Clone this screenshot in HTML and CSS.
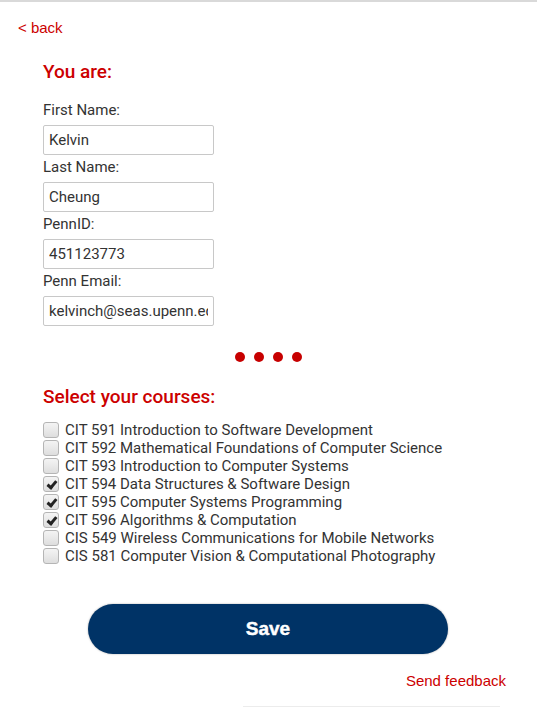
FILE: index.html
```html
<!DOCTYPE html>
<html>
<head>
<meta charset="utf-8">
<link rel="stylesheet" href="styles.css">
</head>
<body>
<div class="page">
  <a class="back" href="#">&lt; back</a>
  <main class="content">
    <h2 class="heading">You are:</h2>
    <div class="field">
      <label class="label">First Name:</label>
      <input class="input" type="text" value="Kelvin">
    </div>
    <div class="field">
      <label class="label">Last Name:</label>
      <input class="input" type="text" value="Cheung">
    </div>
    <div class="field">
      <label class="label">PennID:</label>
      <input class="input" type="text" value="451123773">
    </div>
    <div class="field">
      <label class="label">Penn Email:</label>
      <input class="input" type="text" value="kelvinch@seas.upenn.edu">
    </div>
  </main>
  <div class="dots"><span></span><span></span><span></span><span></span></div>
  <section class="content">
    <h2 class="heading courses-heading">Select your courses:</h2>
    <ul class="courses">
      <li><input type="checkbox" class="cb"><span>CIT 591 Introduction to Software Development</span></li>
      <li><input type="checkbox" class="cb"><span>CIT 592 Mathematical Foundations of Computer Science</span></li>
      <li><input type="checkbox" class="cb"><span>CIT 593 Introduction to Computer Systems</span></li>
      <li><input type="checkbox" class="cb" checked><span>CIT 594 Data Structures &amp; Software Design</span></li>
      <li><input type="checkbox" class="cb" checked><span>CIT 595 Computer Systems Programming</span></li>
      <li><input type="checkbox" class="cb" checked><span>CIT 596 Algorithms &amp; Computation</span></li>
      <li><input type="checkbox" class="cb"><span>CIS 549 Wireless Communications for Mobile Networks</span></li>
      <li><input type="checkbox" class="cb"><span>CIS 581 Computer Vision &amp; Computational Photography</span></li>
    </ul>
  </section>
  <div class="actions"><button class="save">Save</button></div>
  <div class="feedback-row"><a class="feedback" href="#">Send feedback</a></div>
  <div class="bottom-line"></div>
</div>
</body>
</html>
```
FILE: styles.css
```css
html, body {
  margin: 0;
  padding: 0;
  background: #fff;
}
body {
  font-family: Roboto, "Liberation Sans", sans-serif;
  color: #333;
  border-top: 2px solid #d9d9d9;
}
.page {
  display: flex;
  flex-direction: column;
}
.back {
  display: block;
  margin: 16px 0 0 18px;
  font-family: "Liberation Sans", Arial, sans-serif;
  font-size: 15px;
  line-height: 20px;
  color: #c00;
  text-decoration: none;
}
.content {
  padding-left: 43px;
  display: flex;
  flex-direction: column;
}
.heading {
  margin: 22px 0 17px;
  font-family: Roboto, "Liberation Sans", sans-serif;
  font-size: 19px;
  line-height: 23px;
  font-weight: 500;
  color: #c00;
}
.field {
  display: flex;
  flex-direction: column;
  margin-bottom: 2px;
}
.label {
  font-size: 15px;
  line-height: 20px;
  color: #333;
  margin-bottom: 5px;
}
.input {
  box-sizing: border-box;
  width: 171px;
  height: 30px;
  border: 1px solid #c8c8c8;
  border-radius: 2px;
  padding: 0 5px;
  font-family: Roboto, sans-serif;
  font-size: 15px;
  color: #333;
  outline: none;
}
.dots {
  display: flex;
  justify-content: center;
  gap: 9px;
  margin-top: 24px;
}
.dots span {
  width: 10px;
  height: 10px;
  border-radius: 50%;
  background: #c70000;
}
.courses-heading {
  margin: 23px 0 13px;
}
.courses {
  list-style: none;
  margin: 0;
  padding: 0;
}
.courses li {
  display: flex;
  align-items: center;
  height: 18px;
  font-size: 15px;
  line-height: 18px;
  color: #333;
}
.cb {
  appearance: none;
  -webkit-appearance: none;
  position: relative;
  box-sizing: border-box;
  width: 16px;
  height: 16px;
  margin: 0 6px 0 0;
  border: 1px solid #b5b5b5;
  border-radius: 3px;
  background: linear-gradient(#f4f4f4, #dedede);
  flex: none;
}
.cb:checked::after {
  content: "";
  position: absolute;
  left: 4.5px;
  top: 1.5px;
  width: 3px;
  height: 7px;
  border-right: 3px solid #222;
  border-bottom: 3px solid #222;
  transform: rotate(40deg);
}
.actions {
  margin-top: 39px;
  padding-left: 88px;
}
.save {
  width: 360px;
  height: 50px;
  border: none;
  border-radius: 25px;
  background: #003366;
  color: #fff;
  font-family: "Liberation Sans", Arial, sans-serif;
  font-weight: bold;
  font-size: 19px;
  -webkit-text-stroke: 0.4px #fff;
  box-shadow: 0 0 2px rgba(0, 0, 0, 0.35);
}
.feedback-row {
  display: flex;
  justify-content: flex-end;
  padding-right: 31px;
  margin-top: 17px;
}
.feedback {
  font-family: "Liberation Sans", Arial, sans-serif;
  font-size: 15px;
  line-height: 20px;
  color: #c00;
  text-decoration: none;
}
.bottom-line {
  margin: 15px 37px 0 243px;
  height: 1px;
  background: #ececec;
}
```
